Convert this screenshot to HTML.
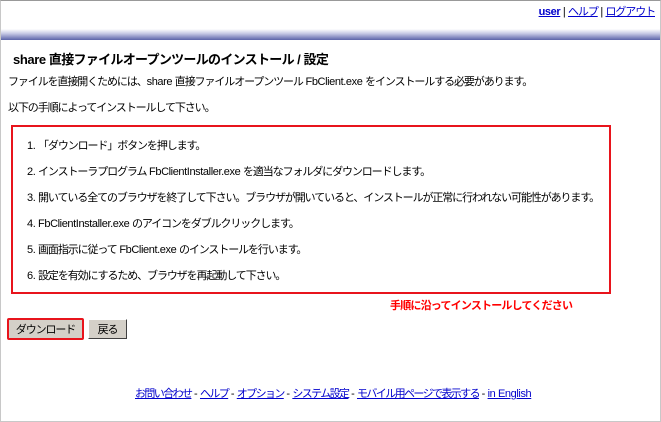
<!DOCTYPE html>
<html><head><meta charset="utf-8"><style>
body{margin:0;width:661px;height:422px;overflow:hidden;background:#fff;font-family:"Liberation Sans","Noto Sans CJK JP",sans-serif;font-size:11px;color:#000;position:relative;letter-spacing:-1.1px}
.l{letter-spacing:-0.4px}
.frame{position:absolute;left:0;top:0;width:659px;height:420px;border:1px solid #c8c8c8;border-top-color:#999}
.abs{position:absolute;white-space:nowrap}
a{color:#00c;text-decoration:underline}
.band{position:absolute;left:1px;right:1px;top:29px;height:11px;background:linear-gradient(#fff,#c8cbe6 40%,#5c64aa)}
.box{position:absolute;left:11px;top:125px;width:596px;height:165px;border:2px solid #e8141c}
.btn{position:absolute;top:319px;height:20px;background:#d4d0c8;border:1px solid;border-color:#fff #404040 #404040 #fff;font-size:11px;display:flex;align-items:center;justify-content:center;box-sizing:border-box}
</style></head><body>
<div class="frame"></div>
<div class="abs" style="right:6px;top:3px"><a href="#" class="l"><b>user</b></a><span class="l"> | </span><a href="#">ヘルプ</a><span class="l"> | </span><a href="#">ログアウト</a></div>
<div class="band"></div>
<div class="abs" style="left:13px;top:49px;font-size:13px;font-weight:bold;letter-spacing:-0.7px"><span class="l">share </span>直接ファイルオープンツールのインストール<span class="l"> / </span>設定</div>
<div class="abs" style="left:8px;top:73px">ファイルを直接開くためには、<span class="l">share </span>直接ファイルオープンツール<span class="l"> FbClient.exe </span>をインストールする必要があります。</div>
<div class="abs" style="left:8px;top:99px">以下の手順によってインストールして下さい。</div>
<div class="box"></div>
<div class="abs" style="left:27px;top:137px"><span class="l">1. </span>「ダウンロード」ボタンを押します。</div>
<div class="abs" style="left:27px;top:163px"><span class="l">2. </span>インストーラプログラム<span class="l"> FbClientInstaller.exe </span>を適当なフォルダにダウンロードします。</div>
<div class="abs" style="left:27px;top:189px"><span class="l">3. </span>開いている全てのブラウザを終了して下さい。ブラウザが開いていると、インストールが正常に行われない可能性があります。</div>
<div class="abs" style="left:27px;top:215px"><span class="l">4. FbClientInstaller.exe </span>のアイコンをダブルクリックします。</div>
<div class="abs" style="left:27px;top:241px"><span class="l">5. </span>画面指示に従って<span class="l"> FbClient.exe </span>のインストールを行います。</div>
<div class="abs" style="left:27px;top:267px"><span class="l">6. </span>設定を有効にするため、ブラウザを再起動して下さい。</div>
<div class="abs" style="left:390px;top:297px;color:#f00;font-weight:bold;letter-spacing:-0.8px">手順に沿ってインストールしてください</div>
<div class="btn" style="left:7px;top:318px;width:77px;height:22px;border:2px solid #e8141c;border-radius:2px">ダウンロード</div>
<div class="btn" style="left:88px;width:39px">戻る</div>
<div class="abs" style="left:135px;top:385px;letter-spacing:-1.6px"><a href="#">お問い合わせ</a><span class="l"> - </span><a href="#">ヘルプ</a><span class="l"> - </span><a href="#">オプション</a><span class="l"> - </span><a href="#">システム設定</a><span class="l"> - </span><a href="#">モバイル用ページで表示する</a><span class="l"> - </span><a href="#" class="l">in English</a></div>
</body></html>
